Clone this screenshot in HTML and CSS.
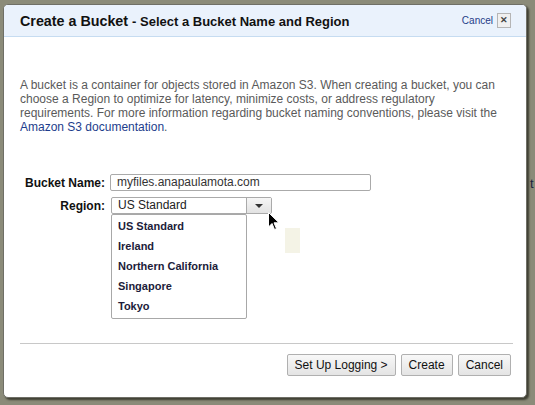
FILE: index.html
```html
<!DOCTYPE html>
<html>
<head>
<meta charset="utf-8">
<link rel="stylesheet" href="styles.css">
</head>
<body>
<span class="bg-t">t</span>
<div class="dialog">
  <div class="header">
    <h1 class="title">Create a Bucket <span class="sub">- Select a Bucket Name and Region</span></h1>
    <div class="close"><a class="close-link">Cancel</a><span class="xbox">&#x2715;</span></div>
  </div>
  <div class="content">
    <p class="intro">A bucket is a container for objects stored in Amazon S3. When creating a bucket, you can choose a Region to optimize for latency, minimize costs, or address regulatory requirements. For more information regarding bucket naming conventions, please visit the <a class="doc">Amazon S3 documentation</a>.</p>
    <div class="form">
      <label class="lbl">Bucket Name:</label>
      <div class="field"><div class="input">myfiles.anapaulamota.com</div></div>
      <label class="lbl">Region:</label>
      <div class="field">
        <div class="select"><span class="sel-text">US Standard</span><span class="sel-btn"><span class="tri"></span></span></div>
        <ul class="menu">
          <li>US Standard</li>
          <li>Ireland</li>
          <li>Northern California</li>
          <li>Singapore</li>
          <li>Tokyo</li>
        </ul>
        <svg class="cursor" width="12" height="19" viewBox="0 0 12 19"><path d="M0.5 0.5 L0.5 15 L4 11.5 L6.5 17.5 L8.5 16.6 L6 10.8 L11 10.8 Z" fill="#000" stroke="#fff" stroke-width="1"/></svg>
        <div class="ghost"></div>
      </div>
    </div>
    <div class="sep"></div>
    <div class="buttons">
      <button class="btn">Set Up Logging &gt;</button>
      <button class="btn">Create</button>
      <button class="btn">Cancel</button>
    </div>
  </div>
</div>
</body>
</html>
```

FILE: styles.css
```css
html, body {
  margin: 0;
  padding: 0;
}
body {
  width: 535px;
  height: 405px;
  overflow: hidden;
  background: #8b8b79;
  font-family: "Liberation Sans", Arial, sans-serif;
  position: relative;
}
.bg-t {
  position: absolute;
  left: 530px;
  top: 176px;
  font-size: 13px;
  color: #1a2340;
}
.dialog {
  position: relative;
  margin: 4px 0 0 3px;
  width: 524px;
  height: 394px;
  background: #fff;
  border: 1px solid #6f6f66;
  border-radius: 5px;
  box-shadow: 2px 2px 2px rgba(30, 30, 20, 0.7);
  box-sizing: border-box;
}
.header {
  height: 32px;
  background: #eaf2fc;
  border-bottom: 1px solid #c6dcf1;
  border-radius: 4px 4px 0 0;
  display: flex;
  align-items: center;
  justify-content: space-between;
  padding: 0 15px 0 16px;
  box-sizing: border-box;
}
.title {
  margin: 0;
  font-size: 14.3px;
  font-weight: bold;
  color: #111;
}
.sub {
  font-size: 13px;
}
.close {
  display: flex;
  align-items: center;
  gap: 4px;
}
.close-link {
  font-size: 10px;
  color: #1f3c88;
}
.xbox {
  width: 12px;
  height: 13px;
  border: 1px solid #b5b5b5;
  background: #f0f0f0;
  font-size: 9px;
  line-height: 13px;
  text-align: center;
  color: #444;
  font-weight: bold;
}
.content {
  padding: 0 15px 0 16px;
}
.intro {
  margin: 41px 0 0 0;
  font-size: 12px;
  line-height: 14px;
  color: #5a5a5a;
}
.doc {
  color: #1d3d8c;
}
.form {
  margin-top: 40px;
  display: grid;
  grid-template-columns: 85px 1fr;
  column-gap: 5px;
  row-gap: 6px;
  align-items: center;
}
.lbl {
  text-align: right;
  font-size: 12px;
  font-weight: bold;
  color: #111;
}
.field {
  position: relative;
  height: 17px;
}
.input {
  width: 261px;
  height: 17px;
  box-sizing: border-box;
  border: 1px solid #aaa;
  border-radius: 2px;
  font-size: 12px;
  line-height: 15px;
  padding-left: 6px;
  color: #333;
}
.select {
  margin-left: 1px;
  width: 161px;
  height: 17px;
  box-sizing: border-box;
  border: 1px solid #aaa;
  border-radius: 2px;
  display: flex;
  font-size: 12px;
  color: #222;
}
.sel-text {
  flex: 1;
  line-height: 15px;
  padding-left: 6px;
}
.sel-btn {
  width: 24px;
  border-left: 1px solid #aaa;
  background: linear-gradient(#f6f6f6, #e2e2e2);
  display: flex;
  align-items: center;
  justify-content: center;
}
.tri {
  width: 0;
  height: 0;
  border-left: 4px solid transparent;
  border-right: 4px solid transparent;
  border-top: 4px solid #333;
}
.menu {
  position: absolute;
  left: 1px;
  top: 17px;
  width: 136px;
  height: 105px;
  box-sizing: border-box;
  margin: 0;
  padding: 1px 0 0 0;
  list-style: none;
  background: #fff;
  border: 1px solid #a8a8a8;
  border-radius: 2px;
  z-index: 2;
}
.menu li {
  height: 20px;
  line-height: 20px;
  padding-left: 6px;
  font-size: 11px;
  font-weight: bold;
  color: #1c1c3a;
}
.cursor {
  position: absolute;
  left: 158px;
  top: 15px;
  z-index: 3;
}
.ghost {
  position: absolute;
  left: 175px;
  top: 31px;
  width: 15px;
  height: 25px;
  background: #f4f3e6;
}
.sep {
  margin-top: 129px;
  width: 493px;
  height: 1px;
  background: #c8c8c8;
}
.buttons {
  margin-top: 10px;
  display: flex;
  justify-content: flex-end;
  gap: 5px;
  padding-right: 0;
}
.btn {
  height: 22px;
  padding: 0 7px;
  font-family: "Liberation Sans", Arial, sans-serif;
  font-size: 12px;
  color: #111;
  background: linear-gradient(#f8f8f8, #e4e4e4);
  border: 1px solid #b0b0b0;
  border-radius: 2px;
}
```
